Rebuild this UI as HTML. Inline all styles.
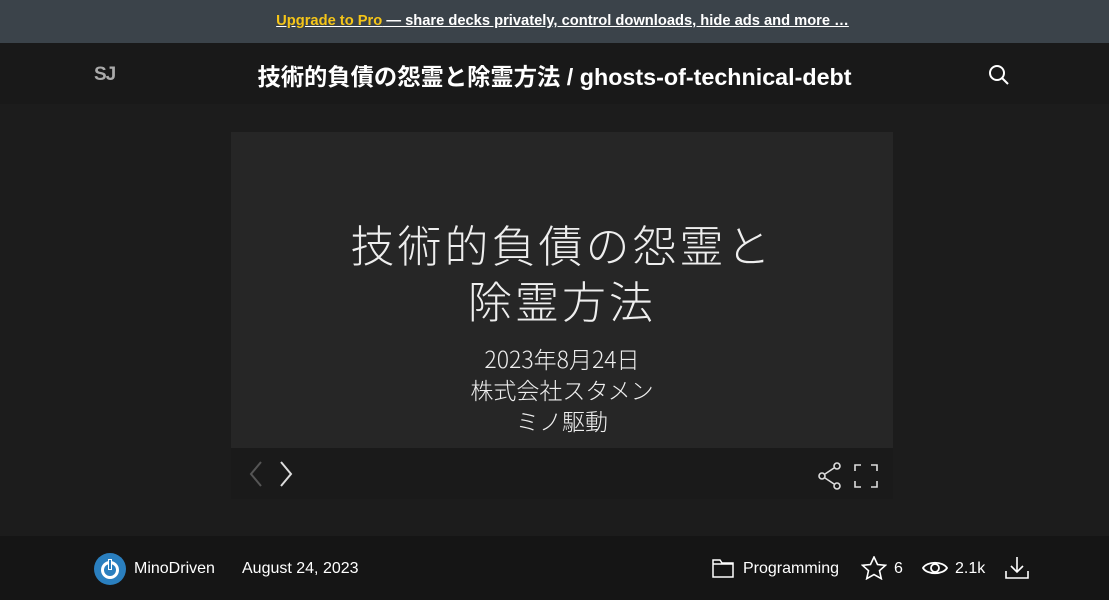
<!DOCTYPE html>
<html><head><meta charset="utf-8"><style>
*{margin:0;padding:0;box-sizing:border-box}
body{width:1109px;height:600px;overflow:hidden;background:#1c1c1c;font-family:"Liberation Sans","Noto Sans CJK JP",sans-serif;color:#fff;position:relative}
.banner{position:absolute;top:0;left:0;width:1109px;height:43px;background:#3b434a;text-align:center;line-height:42px;font-size:14.7px;font-weight:bold;padding-left:16px}
.banner a{color:#fff;text-decoration:underline}
.banner .y{color:#f5c518}
.hdr{position:absolute;top:43px;left:0;width:1109px;height:61px;background:#191919}
.logo{position:absolute;left:94px;top:21px;font-weight:bold;font-size:19px;color:#aaa;letter-spacing:-1px}
.title{position:absolute;left:0;width:1109px;top:15px;text-align:center;font-size:23.3px;font-weight:bold}
.slide{position:absolute;left:231px;top:132px;width:662px;height:316px;background:#262626;text-align:center;font-family:"Noto Sans CJK JP",sans-serif;font-weight:300}
.ctrl{position:absolute;left:231px;top:448px;width:662px;height:51px;background:#1a1a1a}
.foot{position:absolute;left:0;top:536px;width:1109px;height:64px;background:#151515;font-size:16px}
.foot span{position:absolute;top:24px}
</style></head><body>
<div class="banner"><a><span class="y">Upgrade to Pro</span> — share decks privately, control downloads, hide ads and more …</a></div>
<div class="hdr">
<div class="logo">SJ</div>
<div class="title">技術的負債の怨霊と除霊方法 / ghosts-of-technical-debt</div>
<svg style="position:absolute;left:988px;top:21px" width="22" height="22" viewBox="0 0 22 22" fill="none" stroke="#fff" stroke-width="2"><circle cx="9" cy="9" r="7"/><path d="M14 14l6 6"/></svg>
</div>
<div class="slide">
<div style="position:absolute;top:83px;width:100%;font-size:44px;line-height:56px;color:#eee;letter-spacing:3px">技術的負債の怨霊と<br>除霊方法</div>
<div style="position:absolute;top:211px;width:100%;font-size:23px;line-height:31px;color:#eee">2023年8月24日<br>株式会社スタメン<br>ミノ駆動</div>
</div>
<div class="ctrl">
<svg style="position:absolute;left:16px;top:12px" width="52" height="28" viewBox="0 0 52 28" fill="none" stroke-width="2"><path d="M14 2L4 14l10 12" stroke="#555"/><path d="M34 2l10 12-10 12" stroke="#ddd"/></svg>
<svg style="position:absolute;left:586px;top:14px" width="64" height="28" viewBox="0 0 64 28" fill="none" stroke="#ddd" stroke-width="1.6"><circle cx="20" cy="4" r="3"/><circle cx="5" cy="14" r="3"/><circle cx="20" cy="24" r="3"/><path d="M8 12l9-6M8 16l9 6"/><path d="M38 9V3h6M54 3h6v6M60 19v6h-6M44 25h-6v-6"/></svg>
</div>
<div class="foot">
<svg style="position:absolute;left:94px;top:17px" width="32" height="32" viewBox="0 0 32 32"><circle cx="16" cy="16" r="16" fill="#2a7fbf"/><circle cx="16" cy="17" r="9" fill="#fff"/><circle cx="16" cy="17" r="6" fill="#2a7fbf"/><rect x="14" y="6" width="4" height="11" fill="#fff"/><rect x="15" y="7" width="2" height="9" fill="#2a7fbf"/></svg>
<span style="left:134px">MinoDriven</span>
<span style="left:242px">August 24, 2023</span>
<svg style="position:absolute;left:712px;top:22px" width="22" height="20" viewBox="0 0 22 20" fill="none" stroke="#fff" stroke-width="1.5"><path d="M1 2h7l2 3h11v14H1z M1 6h20"/></svg>
<span style="left:743px">Programming</span>
<svg style="position:absolute;left:861px;top:20px" width="26" height="24" viewBox="0 0 26 24" fill="none" stroke="#fff" stroke-width="1.6"><path d="M13 1l3.5 7.5 8 .8-6 5.4 1.8 8L13 18.6 5.7 22.7l1.8-8-6-5.4 8-.8z"/></svg>
<span style="left:894px">6</span>
<svg style="position:absolute;left:922px;top:23px" width="26" height="18" viewBox="0 0 26 18" fill="none" stroke="#fff" stroke-width="1.8"><path d="M1 9C5 2 21 2 25 9 21 16 5 16 1 9z"/><circle cx="13" cy="9" r="4"/></svg>
<span style="left:955px">2.1k</span>
<svg style="position:absolute;left:1004px;top:20px" width="26" height="24" viewBox="0 0 26 24" fill="none" stroke="#fff" stroke-width="1.6"><path d="M13 1v15M7 10l6 6 6-6M2 15v7h22v-7"/></svg>
</div>
</body></html>
